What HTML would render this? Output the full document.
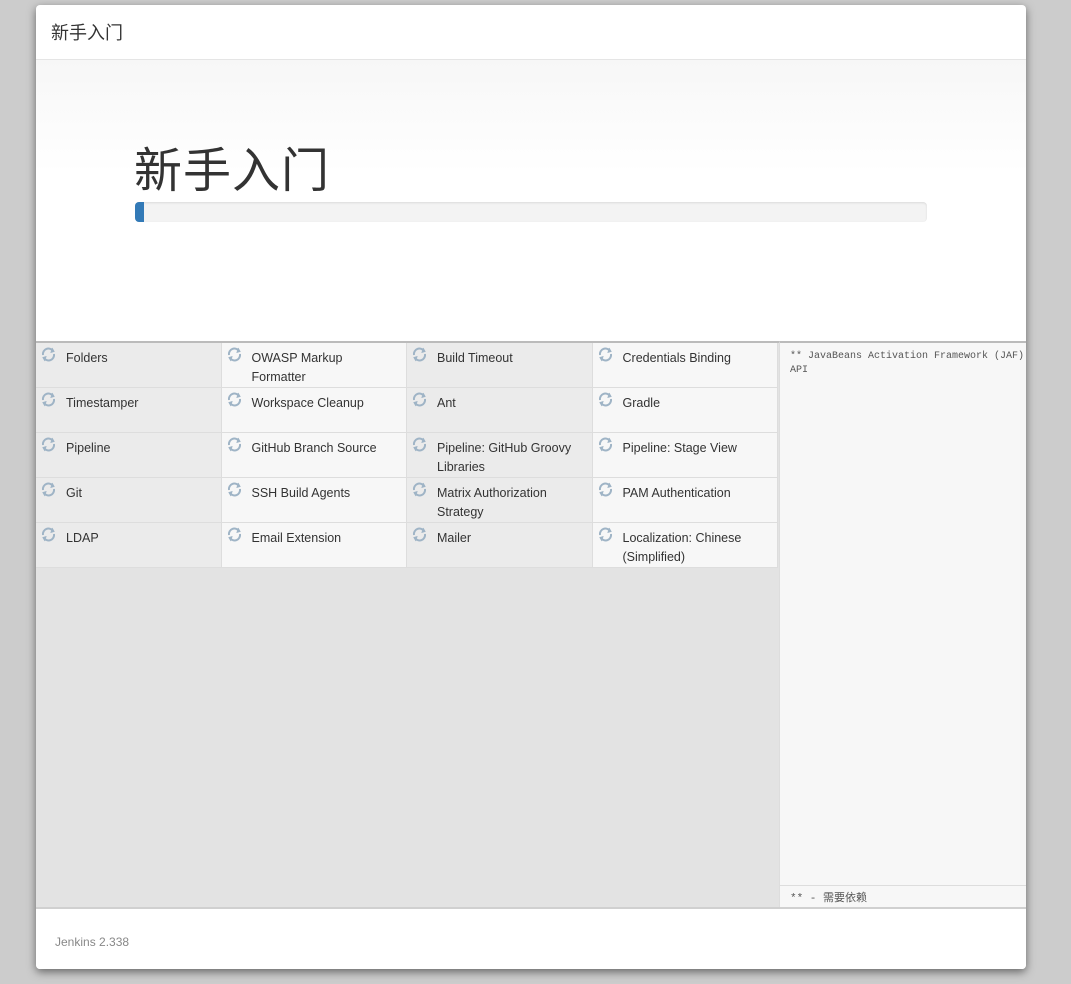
<!DOCTYPE html>
<html><head><meta charset="utf-8"><style>
*{box-sizing:border-box;margin:0;padding:0}
body{width:1071px;height:984px;background:#cccccc;font-family:"Liberation Sans","Noto Sans CJK SC",sans-serif;position:relative;overflow:hidden}
.dlg{position:absolute;left:36px;top:5px;width:990px;height:964px;background:#fff;border-radius:4px;box-shadow:0 3px 9px rgba(0,0,0,.5);overflow:hidden}
.hd{height:55px;border-bottom:1px solid #e5e5e5;padding:14px 0 0 15px;font-size:18px;color:#333}
.hero{position:absolute;top:55px;left:0;width:990px;height:283px;background:linear-gradient(#f7f7f7,#fff 40%);}
.hero h1{position:absolute;left:98px;top:71px;font-size:48px;font-weight:normal;color:#333;letter-spacing:1px}
.bar{position:absolute;left:99px;top:142px;width:792px;height:20px;background:#f3f3f3;border-radius:4px;box-shadow:inset 0 1px 2px rgba(0,0,0,.1)}
.bar i{position:absolute;left:0;top:0;width:9px;height:20px;background:#337ab7;border-radius:4px 0 0 4px}
.grid{position:absolute;top:336px;left:0;width:743px;height:567px;background:#e3e3e3;border-top:2px solid #bbb}
.cell{position:absolute;width:185.5px;height:45px;border-right:1px solid #ddd;border-bottom:1px solid #ddd;font-size:12.5px;color:#333;padding:6px 10px 0 30px;line-height:19px}
.cell svg{position:absolute;left:4px;top:4px}
.c0,.c2{background:#ebebeb}.c1,.c3{background:#f7f7f7}
.side{position:absolute;top:336px;left:743px;width:247px;height:567px;background:#f7f7f7;border-top:2px solid #bbb;border-left:1px solid #ddd;font-family:"Liberation Mono","Noto Sans CJK SC",monospace;font-size:10px;color:#555}
.side .t{padding:7px 0 0 10px;line-height:14px}
.side .f{position:absolute;bottom:0;left:0;right:0;height:23px;border-top:1px solid #ddd;padding:3px 0 0 10px;font-size:11px}
.ft{position:absolute;top:902px;left:0;width:990px;height:62px;border-top:2px solid #d0d0d0;background:#fff;padding:26px 0 0 19px;font-size:12px;color:#888}
</style></head><body>
<div class="dlg">
<div class="hd">新手入门</div>
<div class="hero"><h1>新手入门</h1><div class="bar"><i></i></div></div>
<div class="grid" id="g"></div>
<div class="side"><div class="t">** JavaBeans Activation Framework (JAF)<br>API</div><div class="f">** - 需要依赖</div></div>
<div class="ft">Jenkins 2.338</div>
</div>
<script>
var n=["Folders","OWASP Markup Formatter","Build Timeout","Credentials Binding","Timestamper","Workspace Cleanup","Ant","Gradle","Pipeline","GitHub Branch Source","Pipeline: GitHub Groovy Libraries","Pipeline: Stage View","Git","SSH Build Agents","Matrix Authorization Strategy","PAM Authentication","LDAP","Email Extension","Mailer","Localization: Chinese (Simplified)"];
var ic='<svg width="17" height="15" viewBox="0 0 17 15" fill="none" stroke="#9fb4c6" stroke-width="2"><path d="M3 8A5.5 5.5 0 0 1 13 4"/><path d="M14 7A5.5 5.5 0 0 1 4 11"/><path d="M12 1l2 3.5-3.5 1" fill="#9fb4c6" stroke-width="1"/><path d="M5 14l-2-3.5 3.5-1" fill="#9fb4c6" stroke-width="1"/></svg>';
var h='';n.forEach(function(t,i){var c=i%4,r=Math.floor(i/4);h+='<div class="cell c'+c+'" style="left:'+(c*185.5)+'px;top:'+(r*45)+'px">'+ic+t+'</div>';});
document.getElementById('g').innerHTML=h;
</script>
</body></html>
